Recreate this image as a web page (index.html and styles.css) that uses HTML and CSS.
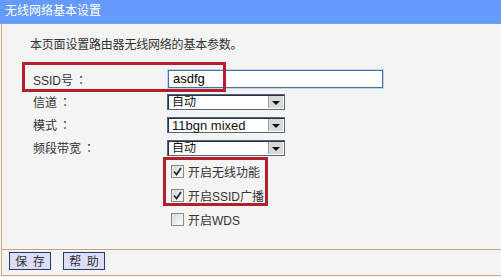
FILE: index.html
```html
<!DOCTYPE html>
<html>
<head>
<meta charset="utf-8">
<link rel="stylesheet" href="styles.css">
</head>
<body>
<div class="header">无线网络基本设置</div>
<div class="panel">
  <div class="content">
    <p class="desc">本页面设置路由器无线网络的基本参数。</p>
    <div class="form">
      <div class="row row-ssid"><span class="label">SSID号<span class="colon">：</span></span><div class="input">asdfg</div></div>
      <div class="row"><span class="label">信道<span class="colon">：</span></span><div class="select"><span class="val">自动</span><span class="arrow"></span></div></div>
      <div class="row"><span class="label">模式<span class="colon">：</span></span><div class="select"><span class="val latin">11bgn mixed</span><span class="arrow"></span></div></div>
      <div class="row"><span class="label">频段带宽<span class="colon">：</span></span><div class="select"><span class="val">自动</span><span class="arrow"></span></div></div>
    </div>
    <div class="checks">
      <label class="check"><span class="box on"><svg viewBox="0 0 13 13" width="13" height="13"><path d="M3 6.5 L5.5 9.5 L10 3" fill="none" stroke="#2a2a2a" stroke-width="1.8"/></svg></span>开启无线功能</label>
      <label class="check"><span class="box on"><svg viewBox="0 0 13 13" width="13" height="13"><path d="M3 6.5 L5.5 9.5 L10 3" fill="none" stroke="#2a2a2a" stroke-width="1.8"/></svg></span>开启SSID广播</label>
      <label class="check"><span class="box"></span>开启WDS</label>
    </div>
  </div>
  <div class="footer">
    <button class="btn">保 存</button>
    <button class="btn">帮 助</button>
  </div>
</div>
<div class="mark mark-ssid"></div>
<div class="mark mark-checks"></div>
</body>
</html>
```
FILE: styles.css
```css
html, body {
  margin: 0;
  padding: 0;
}
body {
  position: relative;
  width: 501px;
  height: 277px;
  overflow: hidden;
  background: #f4f4f4;
  font-family: "Liberation Sans", "Noto Sans CJK SC", sans-serif;
  font-size: 12px;
  color: #333;
  text-spacing-trim: space-all;
}
.header {
  height: 23px;
  line-height: 23px;
  background: #6499fe;
  border-bottom: 1px solid #7aa0e6;
  color: #fff;
  padding-left: 5px;
  font-size: 12px;
}
.panel {
  margin-left: 1px;
  border-left: 1px solid #d2ae7e;
  background: #f4f4f4;
}
.content {
  padding: 12px 0 18px 0;
}
.desc {
  margin: 0 0 0 28px;
  height: 18px;
  line-height: 18px;
  letter-spacing: -0.2px;
}
.form {
  margin-top: 14px;
  padding-left: 31px;
}
.row {
  display: flex;
  align-items: center;
  height: 23px;
}
.row-ssid {
  height: 22px;
}
.label {
  width: 134px;
  flex: none;
}
.colon {
  font-family: "Noto Sans CJK JP", "Noto Sans CJK TC", sans-serif;
  padding-left: 2px;
}
.input {
  width: 209px;
  height: 16px;
  line-height: 16px;
  border: 1px solid #4d6f99;
  box-shadow: 0 0 0 1px #b8d4f4;
  background: #fff;
  margin-left: 1px;
  padding-left: 4px;
  box-sizing: content-box;
  font-size: 13px;
  color: #000;
}
.input, .latin {
  font-family: "Liberation Sans", sans-serif;
}
.select {
  display: flex;
  width: 116px;
  height: 14px;
  border: 1px solid #56657a;
  box-shadow: inset 1px 1px 0 #243146;
  background: #fff;
}
.val {
  flex: 1;
  padding-left: 4px;
  line-height: 15px;
  font-size: 12px;
  color: #111;
}
.val.latin {
  font-size: 13px;
}
.arrow {
  width: 14px;
  margin: 1px 1px 1px 0;
  background: #d9d9d9;
  border-left: 1px solid #9aa3ad;
  position: relative;
}
.arrow::after {
  content: "";
  position: absolute;
  left: 3px;
  top: 5px;
  border-left: 4px solid transparent;
  border-right: 4px solid transparent;
  border-top: 4px solid #111;
}
.checks {
  padding-left: 169px;
}
.check {
  display: flex;
  align-items: center;
  height: 24px;
}
.box {
  width: 11px;
  height: 11px;
  border: 1px solid #8c8c8c;
  background: linear-gradient(135deg, #d8d8d8, #ffffff);
  margin-right: 4px;
  display: flex;
  align-items: center;
  justify-content: center;
  overflow: hidden;
}
.box svg {
  flex: none;
}
.footer {
  border-top: 1px solid #c9a67c;
  border-bottom: 1px solid #c9a67c;
  padding: 2px 0 5px 7px;
  display: flex;
  gap: 12px;
}
.btn {
  width: 42px;
  height: 18px;
  padding: 0;
  margin: 0;
  border: 1px solid #283a66;
  background: #dcdcfb;
  font-family: "Noto Sans CJK SC", sans-serif;
  font-size: 12px;
  line-height: 16px;
  word-spacing: 3px;
  color: #333;
}
.mark {
  position: absolute;
  border: 3px solid #b3202c;
  box-sizing: border-box;
}
.mark-ssid {
  left: 22px;
  top: 62px;
  width: 204px;
  height: 30px;
}
.mark-checks {
  left: 163px;
  top: 157px;
  width: 105px;
  height: 49px;
}
```
